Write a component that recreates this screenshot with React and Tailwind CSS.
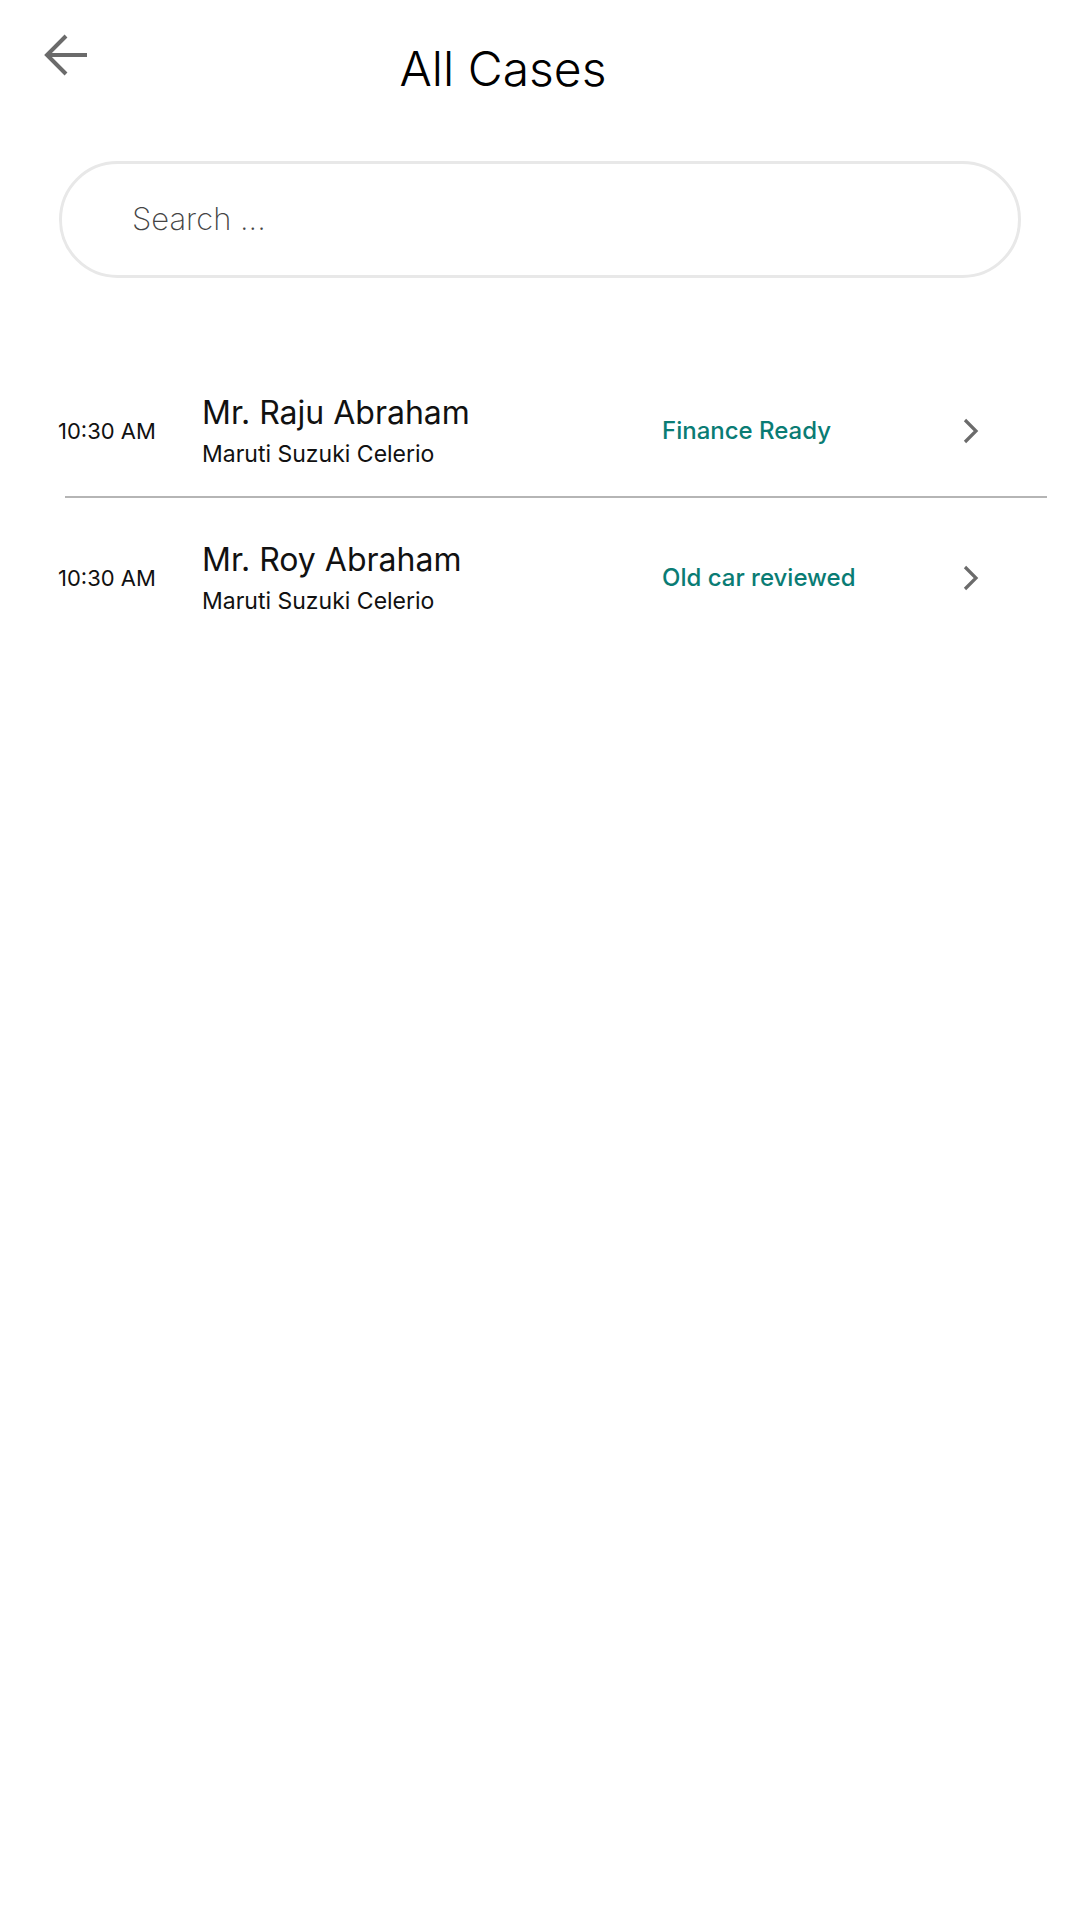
const cases = [
  { time: "10:30 AM", name: "Mr. Raju Abraham", car: "Maruti Suzuki Celerio", status: "Finance Ready" },
  { time: "10:30 AM", name: "Mr. Roy Abraham", car: "Maruti Suzuki Celerio", status: "Old car reviewed" },
];

function BackArrow() {
  return (
    <svg width="46" height="44" viewBox="0 0 46 44" fill="none" stroke="#6b6b6b" strokeWidth="4">
      <path d="M44 22H5" />
      <path d="M23 3L4 22l19 19" />
    </svg>
  );
}

function Chevron() {
  return (
    <svg width="18" height="26" viewBox="0 0 18 26" fill="none" stroke="#6b6b6b" strokeWidth="3.2">
      <path d="M3 2l11 11L3 24" />
    </svg>
  );
}

export default function App() {
  return (
    <div className="min-h-screen w-full bg-white font-['Inter',sans-serif]">
      {/* header */}
      <div className="flex items-start">
        <button className="ml-[43px] mt-[33px]">
          <BackArrow />
        </button>
        <h1 className="flex-1 pr-[163px] pt-[41px] text-center text-[48px] font-light leading-[56px] text-black">
          All Cases
        </h1>
      </div>

      {/* search */}
      <div className="px-[59px] pt-[64px]">
        <div className="flex h-[117px] items-center rounded-full border-[3px] border-[#e8e8e8] pl-[70px]">
          <input
            placeholder="Search ..."
            className="w-full bg-transparent text-[31px] font-extralight text-[#333] outline-none placeholder:text-[#444]"
          />
        </div>
      </div>

      {/* list */}
      <div className="pt-[69px]">
        {cases.map((c, i) => (
          <div key={i}>
            <div className={i === 0 ? "flex items-center pl-[58px] pt-[43px] pb-[24px]" : "flex items-center pl-[58px] pt-[39px] pb-[24px]"}>
              <div className="w-[144px] text-[22px] text-[#111]">{c.time}</div>
              <div className="w-[460px]">
                <div className="text-[32px] leading-[46px] text-[#111]">{c.name}</div>
                <div className="text-[23px] leading-[36px] text-[#111]">{c.car}</div>
              </div>
              <div className="w-[300px] text-[24px] font-medium text-[#0a7c74]">{c.status}</div>
              <Chevron />
            </div>
            {i < cases.length - 1 && <div className="ml-[65px] mr-[33px] h-[2px] bg-[#b5b5b5]" />}
          </div>
        ))}
      </div>
    </div>
  );
}
